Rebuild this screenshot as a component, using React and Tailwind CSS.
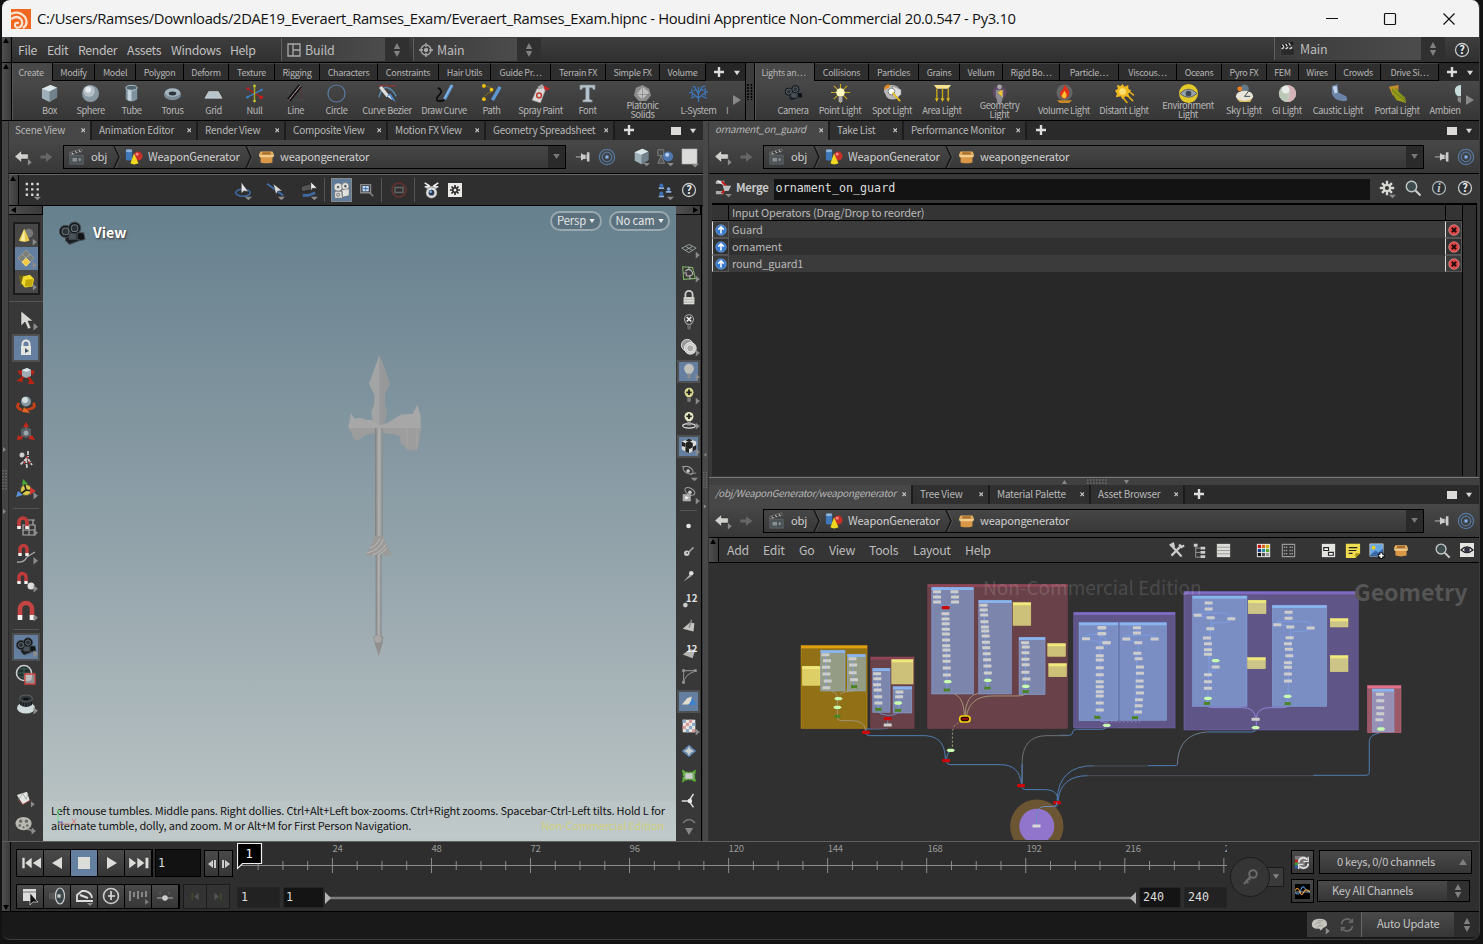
import React from "react";

const RAISED = "bg-gradient-to-b from-[#4a4a4a] to-[#363636]";

/* ---------- icon drawings, all on a 20x20 grid ---------- */
const G = {
  box: <g><path d="M2 5l9-4 7 3v10l-8 5-8-4z" fill="#9fb0b8" /><path d="M2 5l9-4 7 3-8 4z" fill="#dde6ea" /><path d="M10 8l8-4v10l-8 5z" fill="#71828c" /></g>,
  sphere: <g><circle cx="10" cy="10" r="9" fill="#8a98a2" /><circle cx="8.500" cy="7.500" r="6" fill="#b4c0c8" /><circle cx="7.500" cy="6" r="3" fill="#e4eaee" /></g>,
  tube: <g><path d="M4 4v12q6 5 12 0V4z" fill="#7e929e" /><path d="M6 5v12l4 1V5z" fill="#c3d2da" /><ellipse cx="10" cy="4" rx="6" ry="2.600" fill="#4f6572" stroke="#b9c8d0" /></g>,
  torus: <g><ellipse cx="10" cy="11" rx="9" ry="6" fill="#7c8c98" /><ellipse cx="10" cy="9" rx="8" ry="4.500" fill="#a5b5bf" /><ellipse cx="10" cy="10" rx="4" ry="2" fill="#2c333a" /></g>,
  grid: <path d="M5 8h10l4 7H1z" fill="#b9c5cc" stroke="#dfe5e8" strokeWidth=".6" />,
  nul: <g strokeWidth="1.500"><path d="M3 5l14 9" stroke="#b02020" /><path d="M2 14l16-8" stroke="#3b7fc4" /><path d="M10 1v18" stroke="#a8a828" /><circle cx="17" cy="14" r="2" fill="#c02020" /><circle cx="3" cy="5" r="1.500" fill="#c02020" /><circle cx="2.500" cy="14" r="1.300" fill="#3b7fc4" /><circle cx="17.500" cy="6" r="1.300" fill="#3b7fc4" /><circle cx="10" cy="2" r="1.500" fill="#c0c030" /><circle cx="10" cy="18" r="1.500" fill="#c0c030" /></g>,
  line: <g><path d="M3 0v19M0 17h20" stroke="#4a4a4a" /><path d="M3 17L15 2" stroke="#111" strokeWidth="4.500" /><path d="M3 17L15 2" stroke="#ccc" strokeWidth="1" /><path d="M3 17L15 3l1 14" stroke="#802828" strokeWidth=".8" strokeDasharray="2 2" fill="none" /></g>,
  circle: <circle cx="10" cy="10" r="9" fill="none" stroke="#5d7ba5" strokeWidth="1.200" />,
  bezier: <g><path d="M1 2h18" stroke="#a33" /><path d="M1 14Q4 2 10 4T19 13" stroke="#58a" strokeWidth="1.500" fill="none" /><path d="M1 4l3-2 8 10-3 2z" fill="#ddd" /><path d="M9 13l4-3 6 9z" fill="#4f8ed0" /><path d="M10 13l2-1 3 5z" fill="#eee" /></g>,
  draw: <g><path d="M3 4q6 3 2 7t-3 6 8 0" stroke="#0c0c0c" strokeWidth="1.800" fill="none" /><path d="M18 1L10 16" stroke="#5e96d2" strokeWidth="3.500" /><path d="M18 1l-8 14" stroke="#9cc4ee" /></g>,
  path: <g><path d="M2 2q10 1 8 6-9 4-8 9" stroke="#aa8a10" fill="none" strokeDasharray="2 1" /><path d="M19 3L11 17" stroke="#5e96d2" strokeWidth="3.500" /><circle cx="2" cy="2" r="2" fill="#f0c010" /><circle cx="10" cy="6" r="2" fill="#f0c010" /><circle cx="2" cy="16" r="2" fill="#f0c010" /></g>,
  spray: <g><path d="M12 1l8 4-6 3z" fill="#d02020" /><path d="M6 5l7-2 2 4-5 13-9-3z" fill="#d8d8d8" stroke="#777" strokeWidth=".6" /><path d="M7 3l5-3 2 4-6 2z" fill="#aaa" /><circle cx="8.500" cy="12" r="2.500" fill="none" stroke="#c03a2a" strokeWidth="1.500" /></g>,
  font: <path d="M2 1h16v5h-2l-1-2h-3v12l3 1v2H5v-2l3-1V4H5L4 6H2z" fill="#b8c4cc" stroke="#6c7880" strokeWidth=".7" />,
  platonic: <g><path d="M10 1l7 4 2 7-5 6H6l-5-6 2-8z" fill="#8d8d8d" /><path d="M10 3L4 11l6 5 7-7z" fill="#c0c0c0" /><path d="M10 3v13M4 11h13" stroke="#777" strokeWidth=".6" /></g>,
  lsys: <g stroke="#3f76b8" strokeWidth="1.300" fill="none"><path d="M10 19V3M10 15L3 9M10 15l7-6M10 11L6 3M10 10l4-7M3 9l-3 0M3 9l0-4M17 9l3-1M17 9l0-5M6 13l-4 2M14 13l5 2M6 3l-2 0M14 3l3-1M7 6L5 7M13 6l3 1M4 10l-1 3M16 10l2 2" /></g>,
  camera: <g stroke="#454e54" strokeWidth=".8"><path d="M5 11l9-4 2 8-8 3-3-3z" fill="#1c2024" /><circle cx="5" cy="8" r="4.700" fill="#14171a" /><circle cx="12" cy="5.500" r="4.700" fill="#14171a" /><circle cx="5" cy="8" r="2.600" fill="#2c3338" stroke="#6a757c" /><circle cx="12" cy="5.500" r="2.600" fill="#2c3338" stroke="#6a757c" /><path d="M14 9l5 0 1 5-3 1-3-1z" fill="#101214" /><path d="M8 10h5v4H8z" fill="#4a545a" /></g>,
  point: <g><path d="M10 0v20M0 9h20M3 2l14 14M17 2L3 16" stroke="#c8a820" strokeWidth="1.200" /><circle cx="10" cy="9" r="4.500" fill="#fbf7c0" /><path d="M8 13h4v6H8z" fill="#aaa" /></g>,
  spot: <g><path d="M1 8q0-7 7-7 9 0 10 6l-2 8q-8 3-12-1z" fill="#b8b8b8" /><path d="M1 6a5 5 0 017-5L6 4z" fill="#e08820" /><path d="M10 2l9 4v5l-5 4-4-2z" fill="#ddd" stroke="#777" strokeWidth=".6" /><circle cx="9" cy="8" r="3.500" fill="#fff" stroke="#555" strokeWidth=".7" /><path d="M10 9l8 9" stroke="#e0b820" strokeWidth="2" /></g>,
  area: <g><path d="M1 1h18l-3 4H4z" fill="#f5e390" /><path d="M4 5v12M10 5v12M16 5v12" stroke="#c8a818" strokeWidth="1.400" /><path d="M2 15h4l-2 4zM8 15h4l-2 4zM14 15h4l-2 4z" fill="#d8b820" /></g>,
  geo: <g><circle cx="10" cy="9" r="7.500" fill="#7c4a88" opacity=".45" /><circle cx="10" cy="3" r="2.500" fill="#aaa" /><path d="M6 6h8v7l-2 7H8l-2-7z" fill="#8a8a90" /><path d="M8 9l5-3v8z" fill="#f0c030" /></g>,
  volume: <g><circle cx="10" cy="9" r="8.500" fill="#888" opacity=".5" /><path d="M10 1q7 6 4 12-4 5-8 0-2-5 2-7z" fill="#e03018" /><path d="M10 7q4 5 1 8-4 0-4-3z" fill="#ffc030" /><path d="M2 17h16l-3 3H5z" fill="#c88a28" /></g>,
  distant: <g><path d="M13 12l6 6M8 14l5 6M15 8l5 4" stroke="#d8a818" strokeWidth="1.800" /><path d="M8 0l2 3 4-2v4l3 2-3 3 1 4-4-1-3 3-2-3-5 1 1-4-2-3 3-2-1-4 4 1z" fill="#f0b820" /><circle cx="8" cy="8" r="3.500" fill="#fde070" /></g>,
  env: <g><circle cx="10" cy="10" r="10" fill="#e2c828" /><path d="M1 10q9-9 18 0-9 8-18 0z" fill="#98a4ac" stroke="#55606a" /><circle cx="10" cy="10" r="3" fill="#3c4650" /></g>,
  sky: <g><circle cx="10" cy="5" r="4.500" fill="#667888" /><circle cx="5" cy="5" r="2.500" fill="#f08020" /><ellipse cx="10" cy="13" rx="9" ry="6" fill="#e8e4d8" /><path d="M10 13l4-5M10 13h6" stroke="#345" /><path d="M2 15q8 6 16 0l-2 4H5z" fill="#d8c060" /></g>,
  gi: <g><circle cx="10" cy="10" r="9" fill="#c9c9c5" /><path d="M10 1a9 9 0 000 18z" fill="#b9c9b5" /><path d="M10 1a9 9 0 010 18q5-9 0-18z" fill="#d4b4b6" /><circle cx="8" cy="6" r="4" fill="#e9ece8" /></g>,
  caustic: <g><path d="M3 2l6-2 1 9 8 4q4 6-4 5-9-1-11-8z" fill="#6c84a8" /><path d="M4 3l4-1 1 7-3 1z" fill="#c4d4ec" /></g>,
  portal: <g><path d="M1 3l10-2v6L5 12z" fill="#c89030" /><path d="M4 3l14 11 1 6-10-3-5-8z" fill="#989818" /><path d="M4 6l14 12M8 4l10 12" stroke="#5a7a20" /></g>,
  bulb: <g><path d="M10 1a6 6 0 016 6q0 3-3 6H7Q4 10 4 7a6 6 0 016-6z" fill="#c8dcdc" /><path d="M7 14h6v4l-3 2-3-2z" fill="#8a8a8a" /></g>,
  lamp: <g><path d="M10 2a5.500 5.500 0 015.500 5.500q0 3-3 5.500h-5q-3-3-3-5.500A5.500 5.500 0 0110 2z" fill="#bfc0ba" /><path d="M8 13.500h4v4l-2 1-2-1z" fill="#8a8a8a" /></g>,
  lampX: <g><path d="M10 2a5 5 0 015 5q0 3-3 5.500H8Q5 10 5 7a5 5 0 015-5z" fill="none" stroke="#aaa" strokeWidth="1.200" /><path d="M7.500 4.500l5 5m0-5l-5 5" stroke="#eee" strokeWidth="1.800" /><path d="M8 13.500h4v4l-2 1-2-1z" fill="#666" /></g>,
  lampP: <g><path d="M10 2a5 5 0 015 5q0 3-3 5.500H8Q5 10 5 7a5 5 0 015-5z" fill="#d8d890" /><path d="M10 4v6M7 7h6" stroke="#222" strokeWidth="2" /><path d="M8 13h4v4l-2 1-2-1z" fill="#777" /></g>,
  lampG: <g><ellipse cx="10" cy="16.500" rx="7" ry="2.500" fill="none" stroke="#ddd" strokeWidth="1.300" /><path d="M10 1a5 5 0 015 5q0 3-3 5.500H8Q5 9 5 6a5 5 0 015-5z" fill="#e8e8c8" /><path d="M10 3v6M7 6h6" stroke="#222" strokeWidth="2" /><path d="M8 12h4v4H8z" fill="#999" /></g>,
  clap: <g><path d="M2 8h15v10H2z" fill="#4b5356" stroke="#6c7578" strokeWidth=".6" /><path d="M2 5l13-4 1 2L2 7.500z" fill="#272727" stroke="#999" strokeWidth=".6" /><path d="M4 5l2 2M8 3.500l2 2M12 2.500l2 2" stroke="#bbb" strokeWidth="1.200" /><path d="M5 11h5v4H5z" fill="#8a9092" /><circle cx="13" cy="13" r="1.500" fill="#8a9092" /></g>,
  clapD: <g><path d="M1 9h17v9H1z" fill="#2a2a2a" stroke="#555" strokeWidth=".6" /><path d="M1 5l15-4 1 3L2 8z" fill="#1a1a1a" /><path d="M3 4.500l2 3M7 3.500l2 3M11 2.500l2 3M2 10l3-2M7 10l3-2M12 10l3-2" stroke="#ddd" strokeWidth="1.600" /></g>,
  shapes: <g><path d="M1 3v10q3 2 7 0V3z" fill="#3f78b8" /><ellipse cx="4.500" cy="3" rx="3.500" ry="1.600" fill="#8ab4dc" /><circle cx="14.500" cy="9" r="5" fill="#c93028" /><circle cx="13.500" cy="7" r="1.600" fill="#f08a80" /><path d="M10 6l5 11q-5 2.500-9 0z" fill="#f0d820" /></g>,
  crate: <g><path d="M3 9h14v8q-7 2-14 0z" fill="#d89848" /><path d="M3 4h14l2 4H1z" fill="#e8b060" /><path d="M1 8h18l-1 3H2z" fill="#f4cc88" /><path d="M5 5h10v2.500H5z" fill="#a86c28" /></g>,
  back: <g><path d="M2 10l8-7v4h8v6h-8v4z" fill="#cfcfcb" stroke="#222" strokeWidth=".6" /></g>,
  fwd: <path d="M18 10l-8-6v4H3v4h7v4z" fill="#666" />,
  pin: <g><path d="M1 10.500h7" stroke="#999" strokeWidth="1.600" /><path d="M7 6l3 2h4V5h3v11h-3v-3h-4l-3 2z" fill="#ccc" /><path d="M13 5v11" stroke="#444" /></g>,
  target: <g fill="none" stroke="#56779f"><circle cx="10" cy="10" r="7.600" strokeWidth="1.300" /><circle cx="10" cy="10" r="4.800" strokeWidth="1.300" /><circle cx="10" cy="10" r="1.800" fill="#8cb4e8" /></g>,
  help: <g><circle cx="10" cy="10" r="6.500" fill="#2c3134" stroke="#c8c8c8" strokeWidth="1.300" /><text x="10" y="14" fontSize="11" fontWeight="700" textAnchor="middle" fill="#eee">?</text></g>,
  info: <g><circle cx="10" cy="10" r="6.500" fill="#2c3134" stroke="#a8b0b4" strokeWidth="1.300" /><text x="10" y="14" fontSize="12" fontStyle="italic" fontWeight="700" textAnchor="middle" fill="#ccc" fontFamily="Liberation Serif">i</text></g>,
  gear: <g><path d="M10 2v16M2 10h16M4.500 4.500l11 11M15.500 4.500l-11 11" stroke="#d8d8d4" strokeWidth="2.600" /><circle cx="10" cy="10" r="4.500" fill="#d8d8d4" /><circle cx="10" cy="10" r="2.300" fill="#333" /></g>,
  gearBox: <g><path d="M3 3h14v14H3z" fill="#eceae6" /><path d="M10 5v10M5 10h10M6.500 6.500l7 7M13.500 6.500l-7 7" stroke="#222" strokeWidth="1.600" /><circle cx="10" cy="10" r="2.800" fill="#222" /><circle cx="10" cy="10" r="1.500" fill="#eee" /></g>,
  mag: <g><circle cx="8.500" cy="8.500" r="5.200" fill="#3e4c50" stroke="#c4c8c8" strokeWidth="1.400" /><path d="M12.500 12.500l5 5" stroke="#ccc" strokeWidth="2.200" /></g>,
  dots: <g fill="#d8d8d4">{[3, 9, 15].map((y) => [3, 9, 15].map((x) => <path key={x + "-" + y} d={`M${x} ${y - 1}h2.600v2.600h-2.600z`} />))}</g>,
  view1: <g><ellipse cx="10" cy="13" rx="8" ry="4" fill="none" stroke="#3f6aa4" strokeWidth="1.800" /><path d="M8 1v13l3-3 5 1z" fill="#e4e4e4" stroke="#222" strokeWidth=".6" /></g>,
  view2: <g><path d="M0 3l18 13" stroke="#3f6aa4" strokeWidth="2.200" /><path d="M7 3l3 12 2-4 5 0z" fill="#ddd" stroke="#222" strokeWidth=".5" /></g>,
  view3: <g><path d="M1 6l11-3v7L2 12z" fill="#555" stroke="#222" /><path d="M3 16h6l8-3" stroke="#3f6aa4" strokeWidth="3" fill="none" /><path d="M12 1v10l2-3 5 0z" fill="#eee" stroke="#222" strokeWidth=".5" /></g>,
  film: <g fill="#e0e0dc" stroke="#555" strokeWidth=".6"><circle cx="6" cy="6" r="4.800" /><circle cx="14.500" cy="5" r="4.300" /><path d="M2 11h9v8H2zM10 9l9-1v8l-8 2z" /><circle cx="6" cy="6" r="1.200" fill="#456" /><circle cx="14.500" cy="5" r="1.200" fill="#456" /><circle cx="6" cy="15" r="2" fill="#bbb" /></g>,
  zoomSel: <g><path d="M3 4h11v9H3z" fill="#33383c" stroke="#888" strokeWidth="1.500" /><path d="M5 5.500h7v6H5z" fill="#c4dcf4" /><path d="M8.500 6v5M5.500 8.500h6" stroke="#3468a8" /><path d="M13 13l4 4" stroke="#888" strokeWidth="1.600" /></g>,
  ban: <g opacity=".75"><circle cx="10" cy="10" r="7" fill="none" stroke="#7a3434" strokeWidth="1.600" /><path d="M6 7.500h8v5H6z" fill="none" stroke="#777" strokeWidth="1.500" /></g>,
  snap: <g><path d="M4 5h12v3H4z" fill="#ccc" /><path d="M2 1l6 4M18 1l-6 4M2 6l5-1M18 6l-5-1" stroke="#eee" strokeWidth="1.800" /><circle cx="10" cy="12.500" r="6.500" fill="#ddd" stroke="#777" strokeWidth=".6" /><circle cx="10" cy="12.500" r="3.400" fill="#2c3c50" /><circle cx="9" cy="11.500" r="1.400" fill="#8ab8e8" /></g>,
  people: <g><path d="M3 7h6v2H3zM3 16h6v2H3zM11 11h6v2h-6z" fill="#8aaede" /><circle cx="6" cy="5" r="2.200" fill="#3c70b8" /><circle cx="6" cy="14" r="2.200" fill="#3c70b8" /><circle cx="14" cy="9" r="2" fill="#7aa4dc" /></g>,
  ghost: <g><path d="M1 2h7v7H1z" fill="#4a4a4a" stroke="#888" /><path d="M5 9l4 9H1z" fill="#555" stroke="#888" /><circle cx="13" cy="10" r="6" fill="#4f78b0" /><circle cx="12" cy="8" r="2.400" fill="#b4d0f0" /></g>,
  white: <path d="M2 2h16v16H2z" fill="#dcdcda" stroke="#999" strokeWidth=".5" />,
  cone: <g><circle cx="13" cy="7" r="5" fill="#777" /><path d="M8 2l6 13q-6 3-12 0z" fill="#e8c848" /><path d="M8 2l1 14-5-1z" fill="#f8eca0" /></g>,
  diamond: <g><path d="M10 0l9 9-9 9-9-9z" fill="#7c8078" stroke="#a4a49a" strokeWidth=".7" /><path d="M5.500 4.500l9 9M14.500 4.500l-9 9" stroke="#bbb" strokeWidth=".6" /><path d="M10 9l4.500 4.500L10 18l-4.500-4.500z" fill="#f4c840" stroke="#fff0a0" strokeWidth=".7" /></g>,
  ycube: <g><path d="M1 3h9v11H3z" fill="#6c6218" /><path d="M6 4l8-2 5 5-2 9-9 1-4-5z" fill="#f0dc30" /><path d="M9 8l9-1-2 9-8 0z" fill="#c0a808" /></g>,
  cursor: <path d="M5 1v15l4-4 3 7 3-1-3-7h5z" fill="#d8d8d4" stroke="#222" strokeWidth=".5" />,
  lock: <g><path d="M6.500 8V6a3.500 3.500 0 017 0v2" fill="none" stroke="#e4e4e0" strokeWidth="2" /><path d="M5 8h10v9H5z" fill="#e4e4e0" /><path d="M9 10v5l4-2z" fill="#456" /></g>,
  padlock: <g><path d="M6 9V6a4 4 0 018 0v3" fill="none" stroke="#ccc" strokeWidth="2" /><path d="M4 9h12v8H4z" fill="#deded8" /><path d="M4 11.500h12M4 14.500h12" stroke="#999" strokeWidth=".8" /></g>,
  move: <g><path d="M1 5l6-1-2 6zM19 5l-5-1 2 6zM0 15l6-4 1 5zM19 18l-7 0 2-5z" fill="#b82418" /><path d="M10 8L4 14M10 8l6 8" stroke="#b82010" strokeWidth="2.400" /><path d="M6 4l5-2 4 2v6l-5 2-4-2z" fill="#a0acb4" /><path d="M6 4l5-2 4 2-5 2z" fill="#dce4e8" /></g>,
  rotate: <g><path d="M3 9q-4 5 3 7M17 9q4 4-3 6l-4 1" fill="none" stroke="#c84018" strokeWidth="2.800" /><path d="M8 13l6 6-8-1z" fill="#e06820" /><circle cx="10" cy="7.500" r="5" fill="#8a98a2" /><circle cx="9" cy="6" r="3" fill="#d4dce0" /></g>,
  scale: <g><path d="M10 0l3 5H7zM1 18l1-5 5 4zM19 18l-7-1 4-4z" fill="#c8281a" /><path d="M10 3v9L4 16M10 12l7 4" stroke="#c8281a" strokeWidth="2" fill="none" /><path d="M5 7l5-2 5 2v7l-5 2-5-2z" fill="#5c666e" opacity=".85" /><circle cx="10" cy="11" r="2.500" fill="#9aa6ae" /></g>,
  pose: <g fill="none" stroke="#ccc" strokeWidth="1.800"><circle cx="6" cy="5" r="1.600" fill="#ddd" /><path d="M12 1v6M11 8l-7 7M10 9l1 9M12 9l4 6" strokeDasharray="4 1" /><path d="M10 7l2 1M8 12l1 1M13 12l1 1" stroke="#c33" /></g>,
  handle: <g><circle cx="10" cy="11" r="5.500" fill="#d8cc48" stroke="#554" /><path d="M10 11L8 3M10 11l7 1M10 11l-7 5" stroke="#222" strokeWidth="1.600" /><path d="M7 0l5 5-6 1z" fill="#48a838" /><path d="M14 8l6 4-6 4z" fill="#d03838" /><path d="M0 18l2-6 5 4z" fill="#5a90d8" /></g>,
  magGrid: <g><path d="M7 9h12v10H7zM13 9v10M7 14h12M17 4v5M11 4h8" fill="none" stroke="#aaa" strokeWidth="1.200" /><path d="M3 12V6a4 4 0 018 0v6" fill="none" stroke="#c03c3c" strokeWidth="3.600" /><path d="M1.200 10h3.600v3H1.200zM9.200 10h3.600v3H9.200z" fill="#eee" /></g>,
  magCurve: <g><path d="M1 18q7 1 10-5 3-2 8-5" fill="none" stroke="#aaa" strokeWidth="1.400" /><path d="M4 10V5a3.500 3.500 0 017 0v5" fill="none" stroke="#c03c3c" strokeWidth="3.400" /><path d="M2.300 9h3.400v3H2.300zM9.300 9h3.400v3H9.300z" fill="#eee" /></g>,
  magPoint: <g><circle cx="15" cy="14" r="3.500" fill="#ddd" /><path d="M3 11V5a3.500 3.500 0 017 0v5" fill="none" stroke="#c03c3c" strokeWidth="3.400" /><path d="M1.300 9h3.400v3H1.300zM8.300 9h3.400v3H8.300z" fill="#eee" /></g>,
  magnet: <g><path d="M4 17V8a6 6 0 0112 0v9" fill="none" stroke="#c44444" strokeWidth="4.600" /><path d="M1.700 14h4.600v5H1.700zM13.700 14h4.600v5h-4.600z" fill="#f0f0f0" /></g>,
  render: <g><circle cx="8" cy="8" r="7.500" fill="#22302e" stroke="#ccc" strokeWidth="1.600" /><path d="M1 8h14M8 1v14M3 4h10M3 12h10" stroke="#4a6a64" strokeWidth=".7" /><circle cx="12" cy="12" r="4" fill="#aaa" /><path d="M9 9h10v10H9z" fill="#ccc" fillOpacity=".6" stroke="#d04444" strokeWidth="1.300" /></g>,
  flip: <g><ellipse cx="10" cy="14" rx="9" ry="5.500" fill="#d0dcdc" /><path d="M4 5v6q6 4 12 0V5z" fill="#1c2224" /><path d="M6 8v4M8.500 9v4M11.500 9v4M14 8v4" stroke="#556" strokeWidth=".6" /><ellipse cx="10" cy="4.500" rx="6.500" ry="3.500" fill="#30383c" stroke="#666" /><ellipse cx="10" cy="5" rx="3" ry="1.300" fill="#111" /></g>,
  paper: <g><path d="M1 6l12-4 3 10-8 5z" fill="#e4e4e0" /><path d="M3 11l5-7 4 7 2-6" stroke="#9aa" fill="none" /><path d="M3 12l5 5 9-5" stroke="#a44" fill="none" /></g>,
  reel: <g><ellipse cx="9" cy="9" rx="8.500" ry="7" fill="#b8b8b0" /><circle cx="6" cy="6.500" r="1.700" fill="#666" /><circle cx="12" cy="6.500" r="1.700" fill="#666" /><circle cx="5" cy="11" r="1.300" fill="#666" /><circle cx="13" cy="11" r="1.300" fill="#666" /><circle cx="9" cy="13" r="1.200" fill="#666" /><path d="M12 15q5 0 6 3" stroke="#888" fill="none" strokeWidth="1.500" /></g>,
  plane: <g fill="none" stroke="#9aa8a4" strokeWidth="1"><path d="M2 9l8-4 8 4-8 5z" /><path d="M6 7l8 4.500M14 7l-8 4.500" /></g>,
  ggrid: <g fill="none" stroke="#7cb064" strokeWidth="1.200"><path d="M3 3l11 1 3 12-13 1z" /><path d="M6 8q4-4 7 0t-2 5-4-2M4 10l4 0M10 3v3M11 13v4" stroke="#bbb" /></g>,
  rings: <g><circle cx="8" cy="8" r="6.500" fill="#999" stroke="#ddd" /><circle cx="11.500" cy="11.500" r="6.500" fill="#c8c8c4" stroke="#eee" /><circle cx="11.500" cy="11.500" r="4" fill="#aaa" stroke="#eee" /></g>,
  checker: <g><path d="M2 5l8-3 8 3v9l-8 4-8-4z" fill="#ddd" /><path d="M6 3.500l4 2 4-2-4-1.500zM2 5l4 2v4l-4-1zM6 11l4 2v5l-4-2zM10 8l4-2v5l-4 2zM14 11l4-2v5l-4 2z" fill="#222" /><circle cx="10" cy="9" r="4" fill="#222" /></g>,
  view4: <g><ellipse cx="9" cy="9" rx="6" ry="3.500" transform="rotate(30 9 9)" fill="none" stroke="#999" strokeWidth="1.300" /><circle cx="9" cy="10" r="2" fill="#ccc" /><path d="M2 5l6 0M11 14l7-2" stroke="#999" /></g>,
  view5: <g><ellipse cx="11" cy="6" rx="6" ry="3.500" transform="rotate(30 11 6)" fill="none" stroke="#999" strokeWidth="1.300" /><circle cx="11" cy="7" r="2" fill="#ccc" /><path d="M3 9h9v8H3z" fill="#aaa" /><path d="M6 11v4l4-2z" fill="#fff" /></g>,
  dot: <circle cx="9.500" cy="10" r="2.600" fill="#e4e4e0" />,
  vec: <g><path d="M8 13l7-7" stroke="#999" strokeWidth="2" /><circle cx="7.500" cy="12.500" r="3" fill="#ccc" /><circle cx="8" cy="12" r="1" fill="#444" /></g>,
  vec2: <g><path d="M4 16l7-8 2 2z" fill="#aaa" /><circle cx="12.500" cy="7" r="2.500" fill="#ddd" /></g>,
  n12: <g><text x="6.500" y="11" fontSize="11" fontWeight="700" fill="#ddd">12</text><circle cx="6" cy="14.500" r="2.600" fill="#ccc" /></g>,
  prim: <g><path d="M3 13l8-7 5 1-1 9z" fill="#c4c4c0" /><path d="M10 12l3-9" stroke="#888" strokeWidth="1.500" /></g>,
  prim12: <g><path d="M3 14l8-6 6 1-3 9z" fill="#b4b4b0" /><text x="7" y="11" fontSize="10.500" fontWeight="700" fill="#eee">12</text></g>,
  hull: <g fill="none" stroke="#888" strokeWidth="1.200"><path d="M4 17V4h13" /><path d="M4 17Q6 8 16 5" /><path d="M3 3h2v2H3zM16 3h2v2h-2zM3 16h2v2H3z" fill="#bbb" /></g>,
  blade: <g><path d="M2 14l6-7 5-2-1 9z" fill="#e0ddd0" /><path d="M14 7l4 7-9 1z" fill="#3f80d0" /></g>,
  tex: <g><path d="M3 3h14v14H3z" fill="#e8e4e0" />{[[3, 3, "#88a8c8"], [10, 3, "#d89898"], [6.500, 6.500, "#d89898"], [13.500, 6.500, "#88a8c8"], [3, 10, "#d89898"], [10, 10, "#88a8c8"], [6.500, 13.500, "#88a8c8"], [13.500, 13.500, "#d89898"]].map((p, i) => <rect key={i} x={p[0]} y={p[1]} width="3.500" height="3.500" fill={p[2]} />)}</g>,
  dia2: <g><path d="M10 4l7 6-7 6-7-6z" fill="#7a8c98" stroke="#5a88c0" strokeWidth="1.200" /><path d="M10 5v10M5 10h10" stroke="#ddd" /><path d="M10 6l4 4-4 4-4-4z" fill="#c8d0d0" /></g>,
  green: <g><path d="M3 4l4 2h6l4-2-1 6 1 6-4-2H7l-4 2 1-6z" fill="#77a868" stroke="#58b030" strokeWidth="1.500" strokeDasharray="3 1" /><path d="M6 7h8v6H6z" fill="#ccc" /></g>,
  axes: <g stroke="#ddd" strokeWidth="1.600"><path d="M10 10H2M10 10l5-8M10 10l5 7" /><circle cx="11" cy="10" r="2.500" fill="#eee" stroke="none" /></g>,
  mergeN: <g><path d="M1 2h10v4H1zM1 14h9v4H1z" fill="#aaa" /><path d="M3 2l10 6" stroke="#eee" strokeWidth="2" /><path d="M8 3l6 6M8 17l5-6" stroke="#c01818" strokeWidth="2.400" /><path d="M9 8h10l-3 6h-5z" fill="#bcc0c0" /></g>,
  up: <g><circle cx="10" cy="10" r="7.500" fill="#3478d0" stroke="#8ab4e8" strokeWidth=".8" /><path d="M10 15V6M6 9.500L10 5.500l4 4" stroke="#fff" strokeWidth="2.200" fill="none" /></g>,
  del: <g><circle cx="10" cy="10" r="7.500" fill="#d84444" stroke="#e99" strokeWidth="1" /><path d="M7 7l6 6m0-6l-6 6" stroke="#1c0808" strokeWidth="2.800" /></g>,
  tools: <g strokeWidth="2.600" stroke="#ccc"><path d="M4 4l12 13" /><path d="M16 4L4 16" /><path d="M2 4l4-2 1 4M13 3l3 3 3-2" fill="none" /></g>,
  tree: <g fill="#ccc"><path d="M4 3h4v3H4zM11 6h5v3h-5zM11 10.500h5v3h-5zM11 15h5v3h-5z" /><path d="M6 6v11h5M6 12h5M6 7.500h5" stroke="#999" fill="none" /></g>,
  list: <g><path d="M3 3h14v14H3z" fill="#dcdcd8" /><path d="M3 6.500h14M3 10h14M3 13.500h14" stroke="#999" /></g>,
  palette: <g><path d="M3 3h14v14H3z" fill="#eee" />{["#c01010", "#d86810", "#d0b010", "#1c3c80", "#2c8c98", "#58a830", "#111", "#555", "#999"].map((c, i) => <rect key={i} x={4 + (i % 3) * 4.300} y={4 + Math.floor(i / 3) * 4.300} width="3.400" height="3.400" fill={c} />)}</g>,
  form: <g fill="none" stroke="#999"><path d="M3.500 3.500h13v13h-13z" strokeWidth="1.200" /><path d="M5 6.500h4M11 6.500h4M5 10h4M11 10h4M5 13.500h4M11 13.500h4" strokeWidth="1.600" strokeDasharray="1.500 .7" /></g>,
  netbox: <g><path d="M3 3h14v14H3z" fill="#e4e4e0" /><path d="M5 7h5v3H5zM10 12h5v3h-5z" fill="#fff" stroke="#222" strokeWidth="1.200" /></g>,
  note: <g><path d="M3 3h15v10l-5 5H3z" fill="#f0dc50" /><path d="M13 18v-5h5z" fill="#a89010" /><path d="M6 7h9M6 10h8M6 13h4" stroke="#222" strokeWidth="1.200" /></g>,
  image: <g><path d="M3 3h14v13H3z" fill="#68a8e0" stroke="#ccc" strokeWidth=".8" /><circle cx="7" cy="7" r="2" fill="#f0d020" /><path d="M3 15l6-5 3 2 5-4v8H3z" fill="#3868a8" /><path d="M15 12v7M11.500 15.500h7" stroke="#111" strokeWidth="4" /><path d="M15 13v5M12.500 15.500h5" stroke="#fff" strokeWidth="1.800" /></g>,
  eye: <g><path d="M3 3h14v14H3z" fill="#e4e4e0" /><path d="M4 10q6-6 12 0-6 5-12 0z" fill="#fff" stroke="#222" strokeWidth="1.300" /><circle cx="10" cy="9.800" r="2.800" fill="#334" /></g>,
  brain: <g><path d="M2 10q0-7 8-7 9 0 9 6 0 3-4 4l-3 3-2-2q-7 1-8-4z" fill="#c4c4bc" /><path d="M6 9q3-3 6-1M8 12q3-3 6-1M9 5q3 1 5 0" stroke="#999" fill="none" /></g>,
  refresh: <g fill="none" stroke="#6a6a6a" strokeWidth="1.800"><path d="M4 9a6 6 0 0111-3M16 11a6 6 0 01-11 3" /><path d="M16 3v4h-4M4 17v-4h4" /></g>,
};

function Ic({ n, c, s = "w-5 h-5", m = "" }) {
  return (
    <svg viewBox="0 0 20 20" className={`${s} ${m} shrink-0 overflow-visible`}>
      {G[n]}
      {c === "r" && <path d="M17.500 13v7.500l4.500-3.700z" fill="#8c8c8c" />}
      {c === "d" && <path d="M12 17.500h8l-4 4z" fill="#8c8c8c" />}
    </svg>
  );
}

const Tri = ({ d = "down", m = "", f = "#d8d8d8" }) => (
  <svg viewBox="0 0 8 6" className={`w-2 h-1.5 shrink-0 ${m}`}>
    <path d={d === "down" ? "M0 0h8L4 6z" : "M4 0l4 6H0z"} fill={f} />
  </svg>
);
const Plus = ({ m = "" }) => (
  <svg viewBox="0 0 10 10" className={`w-2.5 h-2.5 shrink-0 ${m}`}>
    <path d="M5 0v10M0 5h10" stroke="#ddd" strokeWidth="2.400" />
  </svg>
);
const Spin = ({ m = "" }) => (
  <svg viewBox="0 0 8 14" className={`w-2 h-3.5 shrink-0 ${m}`}>
    <path d="M4 0l3.200 6H.8zM4 14l3.200-6H.8z" fill="#808080" />
  </svg>
);
const Strip = ({ className, d = "M4 1l3 5H1z" }) => (
  <div className={`shrink-0 border-r border-black bg-gradient-to-r from-[#505050] to-[#3a3a3a] ${className}`}>
    <svg viewBox="0 0 8 8" className="w-2 h-2"><path d={d} fill="#000" /></svg>
  </div>
);

/* ---------- shelves ---------- */
const LEFT_SHELF = [
  ["Create", "w-[40px]"], ["Modify", "w-[42px]"], ["Model", "w-[41px]"], ["Polygon", "w-[48px]"], ["Deform", "w-[45px]"],
  ["Texture", "w-[46px]"], ["Rigging", "w-[45px]"], ["Characters", "w-[58px]"], ["Constraints", "w-[61px]"], ["Hair Utils", "w-[52px]"],
  ["Guide Pr…", "w-[60px]"], ["Terrain FX", "w-[55px]"], ["Simple FX", "w-[54px]"], ["Volume", "w-[46px]"],
];
const RIGHT_SHELF = [
  ["Lights an…", "w-[59px]"], ["Collisions", "w-[54px]"], ["Particles", "w-[50px]"], ["Grains", "w-[41px]"], ["Vellum", "w-[43px]"],
  ["Rigid Bo…", "w-[57px]"], ["Particle…", "w-[59px]"], ["Viscous…", "w-[58px]"], ["Oceans", "w-[45px]"], ["Pyro FX", "w-[45px]"],
  ["FEM", "w-[32px]"], ["Wires", "w-[37px]"], ["Crowds", "w-[45px]"], ["Drive Si…", "w-[58px]"],
];
const LEFT_TOOLS = [
  ["Box", "box", "w-[41px]"], ["Sphere", "sphere", "w-[41px]"], ["Tube", "tube", "w-[41px]"], ["Torus", "torus", "w-[41px]"],
  ["Grid", "grid", "w-[41px]"], ["Null", "nul", "w-[41px]"], ["Line", "line", "w-[41px]"], ["Circle", "circle", "w-[41px]"],
  ["Curve Bezier", "bezier", "w-[60px]"], ["Draw Curve", "draw", "w-[54px]"], ["Path", "path", "w-[41px]"], ["Spray Paint", "spray", "w-[57px]"],
  ["Font", "font", "w-[37px]"], ["Platonic\nSolids", "platonic", "w-[73px]"], ["L-System", "lsys", "w-[39px]"],
];
const RIGHT_TOOLS = [
  ["Camera", "camera", "w-[49px]"], ["Point Light", "point", "w-[45px]"], ["Spot Light", "spot", "w-[59px]"], ["Area Light", "area", "w-[41px]"],
  ["Geometry\nLight", "geo", "w-[74px]"], ["Volume Light", "volume", "w-[55px]"], ["Distant Light", "distant", "w-[65px]"],
  ["Environment\nLight", "env", "w-[63px]"], ["Sky Light", "sky", "w-[49px]"], ["GI Light", "gi", "w-[37px]"],
  ["Caustic Light", "caustic", "w-[65px]"], ["Portal Light", "portal", "w-[53px]"],
];

function Shelf({ tabs, tools, className, padTools, children }) {
  return (
    <div className={`flex flex-col overflow-hidden ${className}`}>
      <div className="flex h-[18px] bg-[#262626] shrink-0 text-[9px] tracking-[-0.33px]">
        {tabs.map(([t, w], i) => (
          <div key={t} className={`${w} shrink-0 flex items-center justify-center whitespace-nowrap border-r border-black text-[#b4b4b4] ${i === 0 ? "bg-[#484848] pr-[3px]" : "border-t border-t-[#444] border-b bg-[#2e2e2e]"}`}>{t}</div>
        ))}
        <Plus m="ml-2 mt-[4px]" />
        <Tri m="ml-[10px] mt-[7px] w-[6px]!" />
      </div>
      <div className={`relative flex h-[39px] bg-gradient-to-b from-[#484848] to-[#363636] ${padTools}`}>
        {tools.map(([t, ic, w]) => (
          <div key={t} className={`${w} shrink-0 flex flex-col items-center pt-[3px]`}>
            <Ic n={ic} s="w-[19px] h-[19px]" />
            <div className={`whitespace-pre text-center text-[9.300px] tracking-[-0.42px] text-[#b8b8b8] ${t.includes("\n") ? "leading-[9px] -mt-[2px]" : "leading-[14px]"}`}>{t}</div>
          </div>
        ))}
        {children}
      </div>
    </div>
  );
}

/* ---------- pane chrome ---------- */
function PaneTabs({ tabs }) {
  return (
    <div className="flex h-[19px] shrink-0 bg-[#2a2a2a] text-[10px] tracking-[-0.24px] text-[#b8b8b8]">
      {tabs.map(([t, w, it], i) => (
        <div key={t} className={`${w} shrink-0 flex items-center justify-between pb-[1px] pr-[5px] whitespace-nowrap border-r-2 border-[#1c1c1c] ${i === 0 ? "bg-[#474747] pl-[6px]" : "bg-[#303030] pl-[7px]"}`}>
          <span className={it || ""}>{t}</span>
          <svg viewBox="0 0 5 5" className="mt-px w-[4.500px] h-[4.500px] shrink-0"><path d="M.5.5l4 4m0-4l-4 4" stroke="#ccc" strokeWidth="1.200" /></svg>
        </div>
      ))}
      <Plus m="ml-[9px] mt-[4px]" />
      <div className="ml-auto mt-[6px] h-[8px] w-[10px] bg-[#dcdad8]" />
      <Tri m="ml-[9px] mr-[7px] mt-[7px] w-[6px]!" />
    </div>
  );
}
const Chev = () => (
  <svg viewBox="0 0 8 22" className="w-2 h-[22px] shrink-0"><path d="M1 0l5 11-5 11" fill="none" stroke="#161616" strokeWidth="1.500" /><path d="M2.500 0l5 11-5 11" fill="none" stroke="#585858" strokeWidth=".7" /></svg>
);
function PathBar({ extra }) {
  return (
    <div className="flex h-[34px] shrink-0 items-center border-b border-black bg-gradient-to-b from-[#484848] to-[#373737] text-[11.100px] tracking-[-0.17px] text-[#d0d0d0] pr-[3px]">
      <Ic n="back" c="r" s="w-[17px] h-[17px]" m="ml-[4px]" />
      <Ic n="fwd" s="w-4 h-4" m="ml-[8px] mr-[9px]" />
      <div className="flex flex-1 h-[24px] items-center border border-black bg-gradient-to-b from-[#464646] to-[#383838]">
        <Ic n="clap" s="w-[18px] h-[18px]" m="ml-[4px] mr-[5px]" />
        <span className="w-[22px]">obj</span>
        <Chev />
        <Ic n="shapes" s="w-[18px] h-[18px]" m="ml-[4px] mr-[5px]" />
        <span className="w-[97px]">WeaponGenerator</span>
        <Chev />
        <Ic n="crate" s="w-[17px] h-[17px]" m="ml-[5px] mr-[5px]" />
        <span>weapongenerator</span>
        <div className="ml-auto flex h-full w-[17px] items-center justify-center bg-[#2a2a2a]"><Tri f="#777" m="w-[7px]! h-[5px]!" /></div>
      </div>
      <Ic n="pin" s="w-[17px] h-[17px]" m={extra ? "ml-[9px]" : "ml-[10px]"} />
      <Ic n="target" m="ml-[5px]" />
      {extra}
    </div>
  );
}

/* ---------- network editor ---------- */
const Fr = ({ x, y, w, h, f, t }) => (
  <g><rect x={x} y={y} width={w} height={h} fill={f} stroke={t} strokeWidth="2" strokeOpacity=".7" /><rect x={x} y={y} width={w} height="8" fill={t} /></g>
);
const Nodes = ({ p, f = "#cdcdcd" }) => <g fill={f}>{p.map(([x, y], i) => <rect key={i} x={x - 12} y={y - 4.500} width="24" height="9" rx="1" />)}</g>;
const col = (x, ys, dx = 0) => ys.map((y, i) => [x + dx * i, y]);
const Pills = ({ p }) => <g fill="#c8fcb0">{p.map(([x, y], i) => <path key={i} d={`M${x - 13} ${y}l6-5h14l6 5-6 5h-14z`} />)}</g>;
const Greens = ({ p }) => <g fill="#4a8420">{p.map(([x, y], i) => <path key={i} d={`M${x - 9} ${y - 6}l4 2h10l4-2v12l-4-2h-10l-4 2z`} />)}</g>;
const Reds = ({ p }) => <g fill="#cc0808">{p.map(([x, y], i) => <rect key={i} x={x - 12} y={y - 5} width="24" height="10" rx="4" />)}</g>;
const Blue = (p) => <Fr {...p} f={p.f || "#7c86ac"} t="#8ab4ee" />;
const Note = (p) => <Fr {...p} f={p.f || "#cdc078"} t="#f0e87c" />;

function Network() {
  return (
    <div className="relative flex-1 overflow-hidden bg-[#303030]">
      <svg viewBox="709 563 770 277" className="block w-[770px] h-[277px]">
        <g transform="translate(790.400 570.300) scale(.33333)">
          <g fill="none" strokeWidth="3" stroke="#4f7db4">
            <path d="M227 488q2 8 10 8h160c45 0 66 20 68 70M292 470v4q-10 2-30 2h-35v8M481 542q-10 4-12 22v12q2 7 10 7h150c40 0 60 20 64 58v8q4 9 12 9h55c30 0 42 8 44 38v6q-4 8-12 8h-25q-22 0-26 26v30" />
            <path d="M949 466q0 10-12 11h-75q-16 0-17 14-1 4-8 4h-30" />
            <path d="M695 640v-60q0-84 75-84h60" stroke="#6b6f73" /><path d="M695 640v-60" /><path d="M803 690q8-74 90-74" /><path d="M800 690q4-104 110-104" />
            <path d="M516 455q-30 4-30 36v42" stroke="#9cae7c" strokeDasharray="6 6" />
          </g>
          <Fr x={32} y={226} w={198} h={248} f="#927116" t="#e0a010" />
          <Fr x={241} y={260} w={130} h={214} f="#694249" t="#8e4656" />
          <Fr x={412} y={42} w={419} h={432} f="#694249" t="#8e4656" />
          <Fr x={850} y={126} w={304} h={347} f="#605587" t="#7f6bc4" />
          <g fill="none" strokeWidth="3" stroke="#a39374"><path d="M141 440q0 11 10 11h30q44 0 44 30M125 364q16 2 16 20v50M150 372q10-10 40-10" /><path d="M470 366q52 0 52 75M590 360q0 6-22 8-44 4-44 72M706 368q0 9-30 9h-70q-70 0-78 64" /><path d="M516 455q-24 4-28 20" strokeDasharray="6 6" /><path d="M264 425q5 8 28 10 28 0 30-10M292 440v20" stroke="#6c86b8" /></g>
          <Note x={36} y={288} w={53} h={57} f="#ddcf66" />
          <Blue x={91} y={240} w={73} h={122} f="#959c86" /><Blue x={171} y={252} w={54} h={110} f="#959c86" />
          <Blue x={247} y={294} w={52} h={132} /><Blue x={308} y={349} w={56} h={79} />
          <Note x={304} y={268} w={64} h={73} />
          <Blue x={424} y={51} w={125} h={320} /><Blue x={565} y={90} w={98} h={281} /><Blue x={686} y={201} w={78} h={172} />
          <Note x={668} y={97} w={53} h={68} /><Note x={772} y={220} w={53} h={38} /><Note x={775} y={280} w={53} h={39} />
          <Blue x={866} y={157} w={117} h={294} f="#7b8ec4" /><Blue x={988} y={157} w={140} h={293} f="#7b8ec4" />
          <g fill="none" stroke="#7d9ce0" strokeWidth="3">
            <path d="M105 253l3 98M186 265l4 80M260 310l4 105M326 364v50M466 130l4 225M580 105l11 245M705 217v145M440 64v30l26 16 28-16V64" />
            <path d="M933 172l-4 20q-50-2-50 12l50 12 20 0q0-16-20-16M929 192v250" />
            <path d="M925 446q0 8 24 10" stroke="#8f80d0" /><path d="M949 455h100" strokeDasharray="6 6" stroke="#8f80d0" />
          </g>
          <Nodes p={[[105, 253], [110, 271], [107, 291], [108, 311], [112, 332], [108, 352], [186, 265], [188, 284], [187, 307], [191, 328]]} />
          <Nodes p={[[260, 310], [261, 325], [260, 343], [262, 359], [263, 379], [264, 398], [327, 365], [326, 379], [292, 464]]} />
          <Nodes p={[[440, 64], [440, 80], [440, 95], [492, 64], [494, 80], [494, 95], ...col(465, [130, 146, 160, 177, 191, 209, 226, 239, 256, 273, 293, 314], 0.4)]} />
          <Nodes p={[...col(579, [105, 119, 134, 154, 170, 182, 197, 216, 232, 250, 268, 287, 308], 1.1), [704, 217], [706, 230], [705, 247], [705, 267], [706, 283], [705, 306], [708, 326]]} />
          <Nodes p={[[933, 172], [933, 190], [887, 205], [949, 217], [928, 232], ...col(928, [256, 269, 292, 313, 334, 349, 364, 377, 398, 419])]} />
          <Pills p={[[144, 385], [141, 411], [323, 398], [472, 334], [592, 330], [706, 348], [949, 465], [481, 540]]} />
          <Greens p={[[191, 349], [141, 438], [264, 417], [323, 420], [469, 359], [591, 353], [706, 364], [921, 441]]} />
          <Reds p={[[466, 112], [292, 445], [227, 486], [467, 571], [692, 646], [800, 697]]} />
          <rect x="508" y="437" width="31" height="18" rx="8" fill="#200" stroke="#f8d010" strokeWidth="5" /><path d="M514 446h20" stroke="#c01010" strokeWidth="4" />
        </g>
        <g transform="translate(1100.300 470.300) scale(.33333)">
          <g fill="none" strokeWidth="3" stroke="#4f7db4">
            <path d="M466 778q0 7-12 7H320" /><path d="M320 785q-80 6-88 84v13" stroke="#6c7d90" /><path d="M231 882q0 4-8 4h-80" /><path d="M143 886H-37M650 915H-42" stroke="#4c5258" transform="translate(0 1)" />
            <path d="M842 780q0 9-14 11-20 4-21 24v92q0 8-10 8H640" />
          </g>
          <Fr x={251} y={364} w={523} h={415} f="#605587" t="#7f6bc4" />
          <Fr x={802} y={646} w={100} h={141} f="#9c5a68" t="#e0708c" />
          <Blue x={277} y={377} w={163} h={331} f="#7b8ec4" /><Blue x={516} y={405} w={163} h={303} f="#7b8ec4" /><Blue x={816} y={656} w={65} h={129} f="#9890b4" />
          <Note x={444} y={390} w={53} h={40} f="#cdc488" /><Note x={442} y={562} w={53} h={33} f="#cdc488" /><Note x={690} y={445} w={53} h={25} f="#cdc488" /><Note x={690} y={556} w={53} h={48} f="#cdc488" />
          <path d="M56 460v290" stroke="#6478b4" strokeWidth="3" />
          <g fill="none" stroke="#7d9ce0" strokeWidth="3">
            <path d="M110 472v20M110 496q-60-4-30 14l34 6v30M114 496q60-6 52 10M110 550l-4 190" />
            <path d="M325 398v30q-50-2-32 8l38 6 4 28M325 428h45q22 0 24 16M394 448q0 10-54 10-10 2-10 18l-8 220M322 560l24 10v30l-22 8" />
            <path d="M565 426v28q-50-2-32 8l38 6 0 30M565 454h45q22 0 24 16M634 474q0 10-54 10-10 2-10 18l-8 200M840 672l0 100" />
            <path d="M322 706q0 6 14 6h90q36 0 40 30M562 706q0 6-14 6h-40q-36 0-40 30v28" stroke="#8f86d8" />
          </g>
          <Nodes p={[[110, 472], [110, 488], [78, 506], [163, 506], [114, 517], [111, 549], [115, 565], [119, 590], [119, 609], [118, 632], [118, 649], [119, 668], [116, 688], [115, 706], [113, 725]]} />
          <Nodes p={[[325, 398], [325, 416], [292, 435], [331, 442], [393, 445], [330, 475], [320, 503], [323, 520], [323, 538], [323, 552], [346, 590], [323, 613], [323, 634], [323, 654], [466, 747]]} />
          <Nodes p={[[565, 426], [565, 444], [531, 463], [570, 470], [631, 473], [568, 502], [563, 520], [566, 537], [567, 556], [563, 577], [563, 591], [563, 611], [563, 632]]} />
          <Nodes p={[[839, 672], [840, 691], [840, 712], [840, 730], [837, 748], [6, 472], [6, 490], [18, 517]]} />
          <Pills p={[[346, 571], [323, 684], [466, 772], [562, 678], [842, 776]]} />
          <Greens p={[[320, 699], [562, 700], [104, 742]]} />
        </g>
        <circle cx="1036.800" cy="826.200" r="26.700" fill="#6c5532" /><circle cx="1036.800" cy="826.200" r="17.500" fill="#9175cc" />
        <path d="M1056.500 802.500v2q-1 2-5 2h-8q-7 1-7 10v9" fill="none" stroke="#6a8cc4" /><rect x="1032.500" y="824.500" width="8" height="3" fill="#d8d8d8" />
      </svg>
      <div className="absolute left-[274px] top-[12px] text-[19px] leading-6 text-white/15 whitespace-nowrap">Non-Commercial Edition</div>
      <div className="absolute left-[645px] top-[14px] text-[23.200px] font-bold leading-7 text-[#555] whitespace-nowrap">Geometry</div>
    </div>
  );
}

/* ---------- viewport tool columns ---------- */
const LEFT_COL = [
  ["cursor", "h-7", "r"], ["lock", "h-7", "", 1], ["move", "h-7"], ["rotate", "h-7"], ["scale", "h-7"], ["pose", "h-7"], ["handle", "h-[30px]", "r"], null,
  ["magGrid", "h-7", "r"], ["magCurve", "h-7", "r"], ["magPoint", "h-7", "r"], ["magnet", "h-[29px]", "r"], null,
  ["camera", "h-7", "r", 1], ["render", "h-7"], ["flip", "h-[29px]", "r"],
];
const RIGHT_COL = [
  ["plane", "h-6", "r"], ["ggrid", "h-6", "r"], ["padlock", "h-[25px]"], ["lampX", "h-6"], ["rings", "h-[25px]", "r"], ["lamp", "h-6", "r", 1],
  ["lampP", "h-6", "r"], ["lampG", "h-[26px]", "r"], ["checker", "h-[26px]", "r", 1], ["view4", "h-6", "d"], ["view5", "h-6", "r"], null,
  ["dot", "h-[25px]"], ["vec", "h-[25px]"], ["vec2", "h-[25px]"], ["n12", "h-[25px]"], ["prim", "h-[25px]"], ["prim12", "h-[25px]"], ["hull", "h-[25px]"],
  ["blade", "h-[26px]", "", 1], ["tex", "h-6", "r"], ["dia2", "h-[25px]"], ["green", "h-[25px]"], ["axes", "h-[25px]"],
];
const Cells = ({ items, sep, sel, size }) => items.map((it, i) => it ? (
  <div key={i} className={`${it[1]} flex shrink-0 items-center justify-center`}>
    <div className={`flex items-center justify-center ${sel} ${it[3] ? "bg-[#647fa0] border-2 border-[#4f5052]" : ""}`}><Ic n={it[0]} c={it[2]} s={size} /></div>
  </div>
) : <div key={i} className={`${sep} shrink-0 flex items-center px-1`}><div className="h-px w-full bg-[#555]" /></div>);

function Viewport() {
  return (
    <div className="flex flex-1 min-h-0 bg-[#383838]">
      <div className="flex w-[34px] shrink-0 flex-col">
        <Strip className="h-[9px] border-b" d="M7 1v6L2 4z" />
        <div className="mx-auto mt-[7px] flex h-[73px] w-[27px] flex-col border-2 border-[#1c1c1c] bg-[#474747]">
          <div className="flex h-6 items-center justify-center"><Ic n="cone" c="r" s="w-[18px] h-[18px]" /></div>
          <div className="flex h-6 items-center justify-center bg-[#647fa0]"><Ic n="diamond" c="r" s="w-[18px] h-[18px]" /></div>
          <div className="flex h-6 items-center justify-center"><Ic n="ycube" c="r" s="w-[17px] h-[17px]" /></div>
        </div>
        <div className="mt-[6px] mb-[4px] h-px bg-[#555]" />
        <Cells items={LEFT_COL} sep="h-[8px]" sel="w-7 h-7" size="w-5 h-5" />
        <div className="mt-auto flex h-[26px] items-center justify-center pr-1"><Ic n="paper" c="r" s="w-[17px] h-[17px]" /></div>
        <div className="flex h-[30px] items-center justify-center pr-1 pb-[3px]"><Ic n="reel" c="r" s="w-[19px] h-[19px]" /></div>
      </div>
      <div className="relative flex w-[633px] shrink-0 flex-col justify-between overflow-hidden bg-gradient-to-b from-[#66808e] via-[#8fa0a8] via-50% to-[#bec7c7]">
        <div className="flex items-start pt-[5px]">
          <Ic n="camera" s="w-[26px] h-[26px]" m="ml-4 mt-[10px]" />
          <div className="ml-[8px] mt-[11px] text-[14.200px] font-bold leading-5 text-white [text-shadow:1px_1px_2px_#333]">View</div>
          <div className="ml-auto flex h-[20px] w-[52px] items-center justify-center gap-[3px] rounded-full border-2 border-[#9aa8b0] bg-[#5c717e] text-[11.300px] tracking-[-0.15px] text-[#e4e4e4]">Persp <Tri f="#eee" m="w-[6px]! h-[4px]!" /></div>
          <div className="ml-[7px] mr-[6px] flex h-[20px] w-[61px] items-center justify-center gap-[3px] rounded-full border-2 border-[#9aa8b0] bg-[#5c717e] text-[11.300px] tracking-[-0.15px] text-[#e4e4e4]">No cam <Tri f="#eee" m="w-[6px]! h-[4px]!" /></div>
        </div>
        <svg viewBox="0 0 420 990" className="absolute left-[277px] top-[134px] w-[140px] h-[330px]">
          <defs><linearGradient id="shaft"><stop offset="0" stopColor="#7c7e80" /><stop offset=".5" stopColor="#b4b3b3" /><stop offset="1" stopColor="#85888a" /></linearGradient></defs>
          <path d="M178 46l18 45 13 40-15 32v30l7 25-8 30-15 18-17-18-8-28 10-30v-26l-16-32 16-45z" fill="#a3a4a4" />
          <path d="M178 46v220l15-18 8-30-7-25v-30l15-32-13-40z" fill="#979899" />
          <path d="M85 262l8-42 10 16 15-3 20 6 22 2 15 13h12l20-8 35-22 36-3 14-26 10 33v36z" fill="#a8a7a7" />
          <path d="M85 262h219l-6 40-7 30-30-3-10-12-8-4-3-24-20-6-24-3H160l-20 4-25 16-12-2-10-22z" fill="#9e9d9d" />
          <path d="M85 263h219" stroke="#b2b1b0" strokeWidth="2" /><path d="M278 226v36M290 264v62M262 264v60" stroke="#acabaa" strokeWidth="4" opacity=".45" />
          <path d="M165 265h24v330h-24z" fill="url(#shaft)" /><path d="M167 640h18v250h-18z" fill="url(#shaft)" />
          <path d="M164 588h26l12 30 14 28-20 2-12-6-18 3-16 2-15-1 18-28z" fill="#9c9a98" /><path d="M140 640q40-10 50-42M158 645q35-15 38-32M175 645q20-10 25-22M150 625q20-8 30-30" stroke="#bcbab8" strokeWidth="3" fill="none" />
          <path d="M160 890q15-10 30 0l-2 20-12 38-12-38z" fill="#908e8e" /><circle cx="174" cy="897" r="11" fill="#a9a7a7" />
        </svg>
        <div className="relative mb-[3px] h-[37px] bg-white/5 px-2 pt-[2px] text-[11px] tracking-[-0.17px] leading-[15px] whitespace-nowrap text-[#141414]">
          <div>Left mouse tumbles. Middle pans. Right dollies. Ctrl+Alt+Left box-zooms. Ctrl+Right zooms. Spacebar-Ctrl-Left tilts. Hold L for</div>
          <div className="flex justify-between pr-1"><span>alternate tumble, dolly, and zoom. M or Alt+M for First Person Navigation.</span><span className="text-[#d0d080]">Non-Commercial Edition</span></div>
          <svg viewBox="0 0 24 22" className="absolute left-[12px] top-[6px] w-6 h-[22px]"><path d="M3 3v14" stroke="#6d8" /><path d="M3 17h12" stroke="#c88" /><path d="M17 12l4 5m0-5l-4 5" stroke="#d77" /><path d="M3 15h5" stroke="#66c" /><path d="M2 2l2 3 3-3" stroke="#6d8" fill="none" /></svg>
        </div>
      </div>
      <div className="flex w-[26px] shrink-0 flex-col border-r border-black">
        <Strip className="h-[9px] border-b pl-[16px]" d="M1 1v6l5-3z" />
        <div className="h-[22px] shrink-0" />
        <Cells items={RIGHT_COL} sep="h-[6px]" sel="w-[23px] h-[23px]" size="w-[18px] h-[18px]" />
        <svg viewBox="0 0 16 24" className="mx-auto mt-1 w-4 h-6"><path d="M2 6q6-7 12 0" fill="none" stroke="#777" strokeWidth="1.500" /><path d="M4 11h8l-4 7z" fill="#888" /></svg>
      </div>
    </div>
  );
}

/* ---------- playbar ---------- */
const TICKS = Array.from({ length: 40 }, (_, i) => (i + 1) * 6);
const tx = (f) => (f - 1) * 4.127 + 0.5;

function Timeline() {
  return (
    <svg viewBox="0 0 990 34" className="block w-[990px] h-[34px] overflow-hidden" fontSize="9.500" letterSpacing="-.2" fill="#999">
      <path d="M0 23.500H990" stroke="#8c8c8c" strokeWidth="1.200" />
      {TICKS.map((f) => <path key={f} d={f % 24 ? `M${tx(f)} 19v9` : `M${tx(f)} 16v15`} stroke="#8c8c8c" />)}
      {TICKS.filter((f) => f % 24 === 0).map((f) => <text key={f} x={tx(f) + (f > 150 ? 0.7 : 0)} y="9.500">{f}</text>)}
      <path d="M.5 1.500h24v20h-19l-5 5z" fill="#000" stroke="#eee" strokeWidth="1.200" />
      <text x="12" y="15.500" fontSize="12" textAnchor="middle" fill="#fff" fontFamily="DejaVu Sans Mono">1</text>
    </svg>
  );
}

const P1 = [
  ["M2 3h2v12H2zM10 3v12L4.500 9zM18 3v12L11 9z", 0], ["M14 3v12L4 9z", 0], ["M3 3h12v12H3z", 1], ["M5 3v12l10-6z", 0], ["M1 3v12l6-6zM8 3v12l6-6zM15 3h2.500v12H15z", 0],
];
const P2 = [
  <g><path d="M2 2h13v12H2z" fill="#ddd" /><path d="M2 5h13" stroke="#777" /><path d="M9 6v12l3-3 5 0z" fill="#111" stroke="#ddd" strokeWidth=".7" /></g>,
  <g><path d="M1 6h4l7-5v16l-7-5H1z" fill="#555" /><ellipse cx="12" cy="9" rx="4.500" ry="8" fill="#3a474a" stroke="#ccc" strokeWidth="1.200" /><circle cx="11" cy="9" r="2" fill="#bbb" /></g>,
  <g><path d="M2 14V8l5-4 3 0q6 1 7 7" fill="none" stroke="#ddd" strokeWidth="1.800" /><path d="M1 14h17M5 8l8 3" stroke="#ddd" strokeWidth="2" /><path d="M12 16h6l-3 3z" fill="#888" /></g>,
  <g><circle cx="9" cy="9" r="7.500" fill="none" stroke="#ccc" strokeWidth="1.600" /><path d="M9 4v9M6 9h7" stroke="#ddd" strokeWidth="1.600" /></g>,
  <g><path d="M1 4v10M5 5v5M9 4v8M13 5v5M17 4v6" stroke="#999" strokeWidth="1.600" /><path d="M16 12v6l4-3z" fill="#777" /></g>,
  <g><path d="M1 11h16" stroke="#777" strokeWidth="2" /><circle cx="9" cy="11" r="2.800" fill="#ccc" /><path d="M2 6l3-2v4zM15 6l-3-2v4z" fill="#555" /></g>,
];

function Playbar() {
  return (
    <div className="flex h-[71px] shrink-0 border-b border-black bg-[#2e2e2e] border-t border-t-[#606060]">
      <Strip className="w-[9px] flex items-end" d="M1 2h6L4 7z" />
      <div className="flex flex-1 flex-col pl-[5px]">
        <div className="flex h-[35px] items-end">
          <div className="flex h-[28px] border border-black">
            {P1.map(([d, s], i) => (
              <div key={i} className={`flex w-[27px] items-center justify-center border-r border-black ${s ? "bg-[#647fa0]" : RAISED}`}>
                <svg viewBox="0 0 18 18" className={i === 0 || i === 4 ? "w-[21px] h-[16px]" : "w-[18px] h-[18px]"} preserveAspectRatio="none"><path d={d} fill="#dcdcd8" /></svg>
              </div>
            ))}
          </div>
          <div className="ml-[2px] flex h-[28px] w-[46px] items-center border border-black bg-[#121212] pl-[2px] pt-[1px] font-[DejaVu_Sans_Mono] text-[11.700px] text-[#ddd]">1</div>
          <div className={`ml-[3px] flex h-[27px] w-[29px] border border-black ${RAISED}`}>
            <div className="flex flex-1 items-center justify-center border-r border-black"><svg viewBox="0 0 10 10" className="w-[10px] h-[10px]"><path d="M6 1v8L1 5zM7 1h2v8H7z" fill="#ccc" /></svg></div>
            <div className="flex flex-1 items-center justify-center"><svg viewBox="0 0 10 10" className="w-[10px] h-[10px]"><path d="M4 1v8l5-4zM1 1h2v8H1z" fill="#ccc" /></svg></div>
          </div>
          <div className="ml-[4px] self-start"><Timeline /></div>
        </div>
        <div className="mt-[7px] flex h-[25px] items-stretch">
          <div className="flex border border-black">
            {P2.map((g, i) => (
              <div key={i} className={`flex w-[27px] items-center justify-center border-r border-black ${RAISED}`}><svg viewBox="0 0 19 19" className="w-[19px] h-[19px] overflow-visible">{g}</svg></div>
            ))}
          </div>
          <div className="ml-[3px] flex w-[47px] border border-[#1c1c1c] bg-[#333]">
            <div className="flex flex-1 items-center justify-center border-r border-[#1c1c1c]"><svg viewBox="0 0 10 10" className="w-[10px] h-[9px]"><path d="M9 1v8L4 5z" fill="#555" /><path d="M1 1h2v8H1z" fill="#3c4c28" /></svg></div>
            <div className="flex flex-1 items-center justify-center"><svg viewBox="0 0 10 10" className="w-[10px] h-[9px]"><path d="M1 1v8l5-4z" fill="#555" /><path d="M7 1h2v8H7z" fill="#3c4c28" /></svg></div>
          </div>
          <div className="ml-[7px] mt-[2px] flex w-[990px] items-center font-[DejaVu_Sans_Mono] text-[11.700px] text-[#ddd]">
            <div className="flex h-[21px] w-[43px] items-center border border-[#252525] bg-[#222] pl-[3px]">1</div>
            <div className="ml-[3px] flex h-[21px] w-[41px] items-center border border-[#252525] bg-[#141414] pl-[2px]">1</div>
            <svg viewBox="0 0 814 14" className="ml-[1px] w-[814px] h-[14px]"><path d="M3 7h806" stroke="#7c7c7c" strokeWidth="2.600" /><path d="M0 1l6 6-6 6zM811 1l-6 6 6 6z" fill="#b4b4b4" /></svg>
            <div className="flex h-[21px] w-[42px] items-center border border-[#252525] bg-[#141414] pl-[3px]">240</div>
            <div className="ml-[3px] flex h-[21px] flex-1 items-center border border-[#252525] bg-[#222] pl-[3px]">240</div>
          </div>
        </div>
      </div>
      <div className="flex w-[64px] shrink-0 items-center pl-[3px]">
        <div className="z-10 flex h-[40px] w-[40px] shrink-0 items-center justify-center rounded-full border border-[#1c1c1c] bg-[#353535]">
          <svg viewBox="0 0 18 18" className="w-[18px] h-[18px]" fill="none" stroke="#6a6a6a" strokeWidth="2"><circle cx="12" cy="6" r="3.800" /><path d="M9.500 8.500L3 16M5 13l2.500 2M7.500 10.500l2 1.500" /></svg>
        </div>
        <div className="-ml-[3px] flex h-[20px] w-[17px] items-center justify-center border border-[#1a1a1a] bg-[#3a3a3a]"><Tri f="#888" m="w-[6px]! h-[5px]!" /></div>
      </div>
      <div className="mt-[8px] flex w-[188px] shrink-0 flex-col gap-[5px] text-[11.100px] tracking-[-0.26px] text-[#c4c4c4]">
        <div className="flex">
          <div className={`flex h-[24px] w-[23px] items-center justify-center border border-black ${RAISED}`}><svg viewBox="0 0 18 18" className="w-[17px] h-[17px]"><path d="M1 2h11v13H1z" fill="#777" /><path d="M1 6h3v3H1z" fill="#c01818" /><path d="M1 9h3v3H1z" fill="#489828" /><path d="M1 12h3v3H1z" fill="#2858a8" /><path d="M5 9a5 5 0 019-3M15 10a5 5 0 01-9 3" fill="none" stroke="#ddd" strokeWidth="2" /><path d="M15 3v5h-5M5 16v-5h5" fill="none" stroke="#ddd" strokeWidth="1.500" /></svg></div>
          <div className={`ml-[5px] flex h-[24px] w-[153px] items-center border border-black pl-[17px] pr-[4px] ${RAISED}`}>0 keys, 0/0 channels<Tri d="up" f="#808080" m="ml-auto" /></div>
        </div>
        <div className="flex">
          <div className={`flex h-[24px] w-[23px] items-center justify-center border border-black ${RAISED}`}><svg viewBox="0 0 16 16" className="w-[15px] h-[15px]"><path d="M0 0h16v16H0z" fill="#000" /><path d="M0 9q4 4 6-2t4-3 6 5" fill="none" stroke="#4a88d0" strokeWidth="1.200" /><path d="M0 7q3-5 5 1t4 1 7-1" fill="none" stroke="#d89030" strokeWidth="1.200" /><path d="M0 8.500h16" stroke="#ccc" strokeWidth=".8" /></svg></div>
          <div className={`ml-[3px] mt-[1px] flex h-[22px] w-[153px] items-center border border-black pl-[14px] ${RAISED}`}>Key All Channels<div className="ml-auto flex h-full w-[22px] items-center justify-center bg-[#303030]"><Spin /></div></div>
        </div>
      </div>
    </div>
  );
}

const Combo = ({ icon, label, className }) => (
  <div className={`flex h-[23px] items-center text-[12.500px] tracking-[-0.2px] text-[#bcbcbc] ${className}`}>
    <div className="flex h-full flex-1 items-center border-l border-[#606060] bg-gradient-to-r from-[#3a3a3a] to-[#4c4c4c] pl-[5px]">{icon}<span className="ml-[4px] pt-[1px]">{label}</span></div>
    <div className="flex h-full w-[24px] items-center justify-center bg-[#303030]"><Spin /></div>
  </div>
);

const ROWS = ["Guard", "ornament", "round_guard1"];

export default function App() {
  return (
    <div className="h-[944px] w-[1483px] overflow-hidden bg-[#131313] pl-[2px] leading-none font-['Noto_Sans_CJK_SC',sans-serif]">
      <div className="flex h-[940px] w-[1478px] flex-col overflow-hidden rounded-[8px] border-b border-r border-[#3c3c3c] bg-[#1a1a1a]">
        {/* title bar */}
        <div className="flex h-[37px] shrink-0 items-center bg-[#f3f3f3] text-[#111]">
          <svg viewBox="0 0 20 20" className="ml-[9px] w-5 h-5"><path d="M0 0h20v20H0z" fill="#f06820" /><path d="M0 5q8-4 14 3 4 7-2 11M0 10q6-4 10 0 3 5-1 8-5 2-5-2 0-3 4-2" fill="none" stroke="#fbe4d4" strokeWidth="2.200" /></svg>
          <span className="ml-[6px] whitespace-nowrap font-['Open_Sans',sans-serif] text-[14.800px] tracking-[-0.335px]">C:/Users/Ramses/Downloads/2DAE19_Everaert_Ramses_Exam/Everaert_Ramses_Exam.hipnc - Houdini Apprentice Non-Commercial 20.0.547 - Py3.10</span>
          <svg viewBox="0 0 130 14" className="ml-auto mr-[23px] w-[130px] h-[14px] shrink-0" fill="none" stroke="#111" strokeWidth="1.200"><path d="M0 6.500h12" /><rect x="58.500" y="1.500" width="11" height="11" rx="1" /><path d="M117.500 1.500l11 11m0-11l-11 11" /></svg>
        </div>
        {/* menu bar */}
        <div className="flex h-[26px] shrink-0 items-center border-b border-black bg-gradient-to-b from-[#3e3e3e] to-[#303030] text-[12.300px] tracking-[-0.35px] text-[#c0c0c0]">
          <Strip className="h-full w-[10px]" />
          <div className="flex pl-[6px] pt-[2px]">
            <span className="w-[29px]">File</span><span className="w-[31px]">Edit</span><span className="w-[49px]">Render</span><span className="w-[44px]">Assets</span><span className="w-[59px]">Windows</span><span className="w-[51px]">Help</span>
          </div>
          <Combo className="w-[128px]" label="Build" icon={<svg viewBox="0 0 14 14" className="w-[14px] h-[14px]"><path d="M1 1h12v12H1zM6 1v12M6 7h7" fill="none" stroke="#aaa" strokeWidth="1.300" /></svg>} />
          <Combo className="ml-[4px] w-[128px]" label="Main" icon={<svg viewBox="0 0 14 14" className="w-[14px] h-[14px]" fill="none" stroke="#aaa" strokeWidth="1.300"><circle cx="7" cy="7" r="5" /><path d="M7 0v4M7 10v4M0 7h4M10 7h4" /><circle cx="7" cy="7" r="1.500" fill="#aaa" /></svg>} />
          <Combo className="ml-auto mb-[2px] w-[171px]" label="Main" icon={<Ic n="clapD" s="w-[16px] h-[16px]" />} />
          <Ic n="help" m="ml-[7px] mr-[7px]" />
        </div>
        {/* shelves */}
        <div className="flex h-[58px] shrink-0 border-b border-black">
          <Strip className="w-[10px]" />
          <Shelf tabs={LEFT_SHELF} tools={LEFT_TOOLS} className="w-[733px] border-l border-[#555]" padTools="pl-[16px]">
            <div className="ml-[8px] mt-[22px] w-[4px] text-[9.300px] leading-[14px] text-[#aaa]">I</div>
            <svg viewBox="0 0 8 10" className="ml-[3px] mt-[14px] w-2 h-2.5"><path d="M0 0v10l8-5z" fill="#888" /></svg>
          </Shelf>
          <div className="flex w-[10px] shrink-0 items-center justify-center border-x border-black bg-[#3c3c3c]">
            <svg viewBox="0 0 6 16" className="w-[6px] h-4"><path d="M1 0v16M4.500 0v16" stroke="#000" strokeWidth="1.500" strokeDasharray="2 1" /></svg>
          </div>
          <Shelf tabs={RIGHT_SHELF} tools={RIGHT_TOOLS} className="flex-1 border-l border-[#555]" padTools="pl-[12.500px]">
            <div className="flex w-[31px] ml-[6px] shrink-0 flex-col items-end text-[9.300px] tracking-[-0.4px] text-[#b8b8b8]">
              <div className="mt-[3px] h-[19px] w-[10px] overflow-hidden"><Ic n="bulb" s="w-[19px] h-[19px]" /></div>
              <div className="whitespace-nowrap leading-[14px]">Ambien</div>
            </div>
            <svg viewBox="0 0 8 10" className="ml-[5px] mt-[14px] w-2 h-2.5"><path d="M0 0v10l8-5z" fill="#888" /></svg>
          </Shelf>
        </div>
        {/* panes */}
        <div className="flex min-h-0 flex-1">
          <div className="flex w-[7px] shrink-0 items-center justify-center border-r border-[#2a2a2a] bg-[#444]">
            <svg viewBox="0 0 6 72" className="w-[6px] h-[72px]"><path d="M1 2v5l3-2.500zM1 64v5l3-2.500z" fill="#888" /><path d="M1 25v20M4 25v20" stroke="#777" strokeWidth="1.200" strokeDasharray="1.500 1.500" /></svg>
          </div>
          <div className="flex w-[694px] shrink-0 flex-col">
            <PaneTabs tabs={[["Scene View", "w-[83px]"], ["Animation Editor", "w-[106px]"], ["Render View", "w-[88px]"], ["Composite View", "w-[102px]"], ["Motion FX View", "w-[98px]"], ["Geometry Spreadsheet", "w-[129px]"]]} />
            <PathBar extra={<><Ic n="box" c="d" s="w-[17px] h-[17px]" m="ml-[16px]" /><Ic n="ghost" c="d" s="w-[17px] h-[17px]" m="ml-[7px]" /><Ic n="white" c="d" s="w-[19px] h-[19px]" m="ml-[6px] mr-px" /></>} />
            <div className="flex h-[32px] shrink-0 items-center border-b border-t border-b-black border-t-[#666] bg-[#2f2f2f]">
              <Strip className="h-full w-[10px]" />
              <Ic n="dots" c="d" s="w-[18px] h-[18px]" m="ml-[4px]" />
              <Ic n="view1" c="d" s="w-[18px] h-[18px]" m="ml-[193px]" />
              <Ic n="view2" c="d" s="w-[18px] h-[18px]" m="ml-[15px]" />
              <Ic n="view3" c="d" s="w-[18px] h-[18px]" m="ml-[15px]" />
              <div className="ml-[6px] h-6 w-px bg-[#555]" />
              <div className="ml-[6px] flex h-[24px] w-[21px] items-center justify-center border border-[#888] bg-[#5f7c9c]"><Ic n="film" s="w-[17px] h-[17px]" /></div>
              <Ic n="zoomSel" s="w-[18px] h-[18px]" m="ml-[6px]" />
              <div className="ml-[5px] h-6 w-px bg-[#555]" />
              <Ic n="ban" m="ml-[7px]" />
              <div className="ml-[5px] h-6 w-px bg-[#555]" />
              <Ic n="snap" s="w-[17px] h-[17px]" m="ml-[8px]" />
              <Ic n="gearBox" m="ml-[5px]" />
              <Ic n="people" c="d" s="w-[18px] h-[18px]" m="ml-auto" />
              <Ic n="help" m="ml-[5px] mr-[4px]" />
            </div>
            <Viewport />
          </div>
          <div className="flex w-[6px] shrink-0 items-center justify-center border-r border-[#333] bg-[#484848]">
            <svg viewBox="0 0 6 72" className="w-[6px] h-[72px]"><path d="M4 2v5L1 4.500zM1 64v5l3-2.500z" fill="#888" /><path d="M1 25v20M4 25v20" stroke="#777" strokeWidth="1.200" strokeDasharray="1.500 1.500" /></svg>
          </div>
          <div className="flex min-w-0 flex-1 flex-col bg-[#383838]">
            <PaneTabs tabs={[["ornament_on_guard", "w-[121px]", "italic text-[9.800px]"], ["Take List", "w-[74px]"], ["Performance Monitor", "w-[123px]"]]} />
            <PathBar />
            <div className="flex h-[27px] shrink-0 items-center">
              <Ic n="mergeN" c="d" s="w-[17px] h-[17px]" m="ml-[6px]" />
              <span className="ml-[4px] text-[11.300px] font-bold tracking-[-0.3px] text-[#c8c8c8]">Merge</span>
              <div className="ml-[5px] mt-[3px] flex h-[21px] flex-1 items-center bg-[#131313] pl-[2px] font-[DejaVu_Sans_Mono] text-[11.700px] text-[#ddd]">ornament_on_guard</div>
              <Ic n="gear" c="d" s="w-[18px] h-[18px]" m="ml-[8px]" />
              <Ic n="mag" s="w-[20px] h-[20px]" m="ml-[7px]" />
              <Ic n="info" m="ml-[6px]" />
              <Ic n="help" m="ml-[6px] mr-[4px]" />
            </div>
            <div className="ml-[3px] mr-[2px] mt-[2px] flex h-[273px] shrink-0 border-t-2 border-black bg-[#282828]">
              <div className="min-w-0 flex-1 text-[11px] tracking-[-0.17px] text-[#b8b8b8]">
                <div className="flex h-[16px] border-b border-black bg-[#343434]"><div className="w-[17px] border-r border-black" /><div className="flex flex-1 items-center pl-[3px]">Input Operators (Drag/Drop to reorder)</div><div className="w-[17px] border-l border-black" /></div>
                {ROWS.map((r, i) => (
                  <div key={r} className={`flex h-[17px] items-center ${i % 2 ? "bg-[#303030]" : "bg-[#3b3b3b]"}`}>
                    <div className="flex h-full w-[17px] items-center justify-center border border-[#555] border-l-[#ddd]"><Ic n="up" s="w-[14px] h-[14px]" /></div>
                    <span className="flex-1 pl-[3px]">{r}</span>
                    <div className="flex h-full w-[17px] items-center justify-center border border-[#555] border-l-[#ddd]"><Ic n="del" s="w-[14px] h-[14px]" /></div>
                  </div>
                ))}
              </div>
              <div className="w-[15px] border-x border-black bg-[#2f2f2f]" />
            </div>
            <div className="mt-px flex h-[8px] shrink-0 items-center justify-center border-t border-[#777] bg-[#404040]">
              <svg viewBox="0 0 72 6" className="ml-1 w-[72px] h-[6px]"><path d="M2 5h5L4.500 1zM64 1h5l-2.500 4z" fill="#888" /><path d="M27 1h20M27 4h20" stroke="#888" strokeWidth="1.200" strokeDasharray="1.500 1.500" /></svg>
            </div>
            <PaneTabs tabs={[["/obj/WeaponGenerator/weapongenerator", "w-[204px]", "italic text-[9.800px]"], ["Tree View", "w-[77px]"], ["Material Palette", "w-[101px]"], ["Asset Browser", "w-[94px]"]]} />
            <PathBar />
            <div className="flex h-[25px] shrink-0 items-center border-b border-black bg-[#353535] text-[12.300px] tracking-[-0.3px] text-[#bcbcbc]">
              <Strip className="h-full w-[10px]" />
              <div className="flex pl-[8px]"><span className="w-[36px]">Add</span><span className="w-[36px]">Edit</span><span className="w-[30px]">Go</span><span className="w-[40px]">View</span><span className="w-[44px]">Tools</span><span className="w-[52px]">Layout</span><span>Help</span></div>
              <div className="ml-auto flex items-center pr-[2px]">
                <Ic n="tools" s="w-[17px] h-[17px]" /><Ic n="tree" s="w-[19px] h-[19px]" m="ml-[5px]" /><Ic n="list" s="w-[19px] h-[19px]" m="ml-[5px]" />
                <Ic n="palette" s="w-[19px] h-[19px]" m="ml-[21px]" /><Ic n="form" s="w-[19px] h-[19px]" m="ml-[6px]" />
                <Ic n="netbox" s="w-[19px] h-[19px]" m="ml-[21px]" /><Ic n="note" s="w-[19px] h-[19px]" m="ml-[5px]" /><Ic n="image" s="w-[19px] h-[19px]" m="ml-[5px]" /><Ic n="crate" s="w-[16px] h-[16px]" m="ml-[7px]" />
                <Ic n="mag" s="w-[19px] h-[19px]" m="ml-[24px]" /><Ic n="eye" s="w-[20px] h-[20px]" m="ml-[5px]" />
              </div>
            </div>
            <Network />
          </div>
        </div>
        <Playbar />
        {/* status bar */}
        <div className="mb-[2px] flex h-[25px] shrink-0 justify-end bg-[#191919] text-[11.100px] tracking-[-0.2px] text-[#c4c4c4]">
          <div className="flex w-[54px] items-center bg-[#383838]"><Ic n="brain" c="r" s="w-[18px] h-[18px]" m="ml-[3px]" /><Ic n="refresh" s="w-[18px] h-[18px]" m="ml-[10px]" /></div>
          <div className={`flex w-[93px] items-center border-l border-[#666] pb-[1px] pl-[15px] ${RAISED}`}>Auto Update</div>
          <div className="flex w-[25px] items-center justify-center bg-[#2c2c2c]"><Spin /></div>
        </div>
      </div>
    </div>
  );
}
